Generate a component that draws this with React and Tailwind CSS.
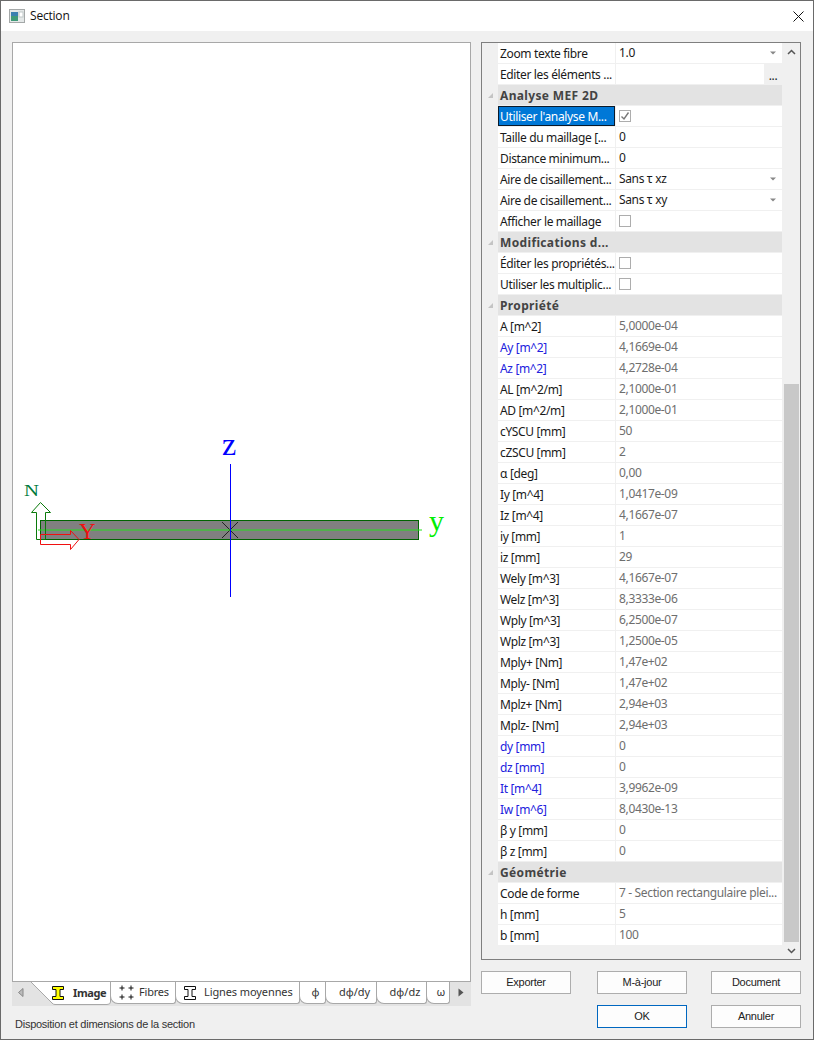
import React from 'react';

const rows = [
  { name: 'Zoom texte fibre', value: '1.0', dark: true, combo: true },
  { name: 'Editer les éléments ...', value: '', button: true },
  { header: 'Analyse MEF 2D' },
  { name: "Utiliser l'analyse M...", check: true, checked: true, selected: true },
  { name: 'Taille du maillage [...', value: '0', dark: true },
  { name: 'Distance minimum...', value: '0', dark: true },
  { name: 'Aire de cisaillement...', value: 'Sans τ xz', dark: true, combo: true },
  { name: 'Aire de cisaillement...', value: 'Sans τ xy', dark: true, combo: true },
  { name: 'Afficher le maillage', check: true },
  { header: 'Modifications d...' },
  { name: 'Éditer les propriétés...', check: true },
  { name: 'Utiliser les multiplic...', check: true },
  { header: 'Propriété' },
  { name: 'A [m^2]', value: '5,0000e-04' },
  { name: 'Ay [m^2]', value: '4,1669e-04', blue: true },
  { name: 'Az [m^2]', value: '4,2728e-04', blue: true },
  { name: 'AL [m^2/m]', value: '2,1000e-01' },
  { name: 'AD [m^2/m]', value: '2,1000e-01' },
  { name: 'cYSCU [mm]', value: '50' },
  { name: 'cZSCU [mm]', value: '2' },
  { name: 'α [deg]', value: '0,00' },
  { name: 'Iy [m^4]', value: '1,0417e-09' },
  { name: 'Iz [m^4]', value: '4,1667e-07' },
  { name: 'iy [mm]', value: '1' },
  { name: 'iz [mm]', value: '29' },
  { name: 'Wely [m^3]', value: '4,1667e-07' },
  { name: 'Welz [m^3]', value: '8,3333e-06' },
  { name: 'Wply [m^3]', value: '6,2500e-07' },
  { name: 'Wplz [m^3]', value: '1,2500e-05' },
  { name: 'Mply+ [Nm]', value: '1,47e+02' },
  { name: 'Mply- [Nm]', value: '1,47e+02' },
  { name: 'Mplz+ [Nm]', value: '2,94e+03' },
  { name: 'Mplz- [Nm]', value: '2,94e+03' },
  { name: 'dy [mm]', value: '0', blue: true },
  { name: 'dz [mm]', value: '0', blue: true },
  { name: 'It [m^4]', value: '3,9962e-09', blue: true },
  { name: 'Iw [m^6]', value: '8,0430e-13', blue: true },
  { name: 'β y [mm]', value: '0' },
  { name: 'β z [mm]', value: '0' },
  { header: 'Géométrie' },
  { name: 'Code de forme', value: '7 - Section rectangulaire plei...' },
  { name: 'h [mm]', value: '5' },
  { name: 'b [mm]', value: '100' },
];

function Row({ row }) {
  if (row.header) {
    return (
      <div className="flex h-[21px] pb-px">
        <div className="w-4 flex items-center justify-center">
          <svg width="7" height="7" viewBox="0 0 7 7"><path d="M6 1V6H1Z" fill="#c4c4c4" /></svg>
        </div>
        <div className="flex-1 bg-[#e3e3e3] pl-[2px] font-bold text-[#444] leading-[22px] tracking-[0.35px] whitespace-nowrap">{row.header}</div>
      </div>
    );
  }
  const nameColor = row.selected
    ? 'bg-[#0078d7] text-white border border-[#0a1a2a] leading-[20px] pl-px'
    : row.blue ? 'bg-white text-[#2222dd] pl-[2px] leading-[22px]' : 'bg-white text-[#1a1a1a] pl-[2px] leading-[22px]';
  return (
    <div className="flex h-[21px] pb-px">
      <div className="w-4" />
      <div className={`w-[117px] mr-px whitespace-nowrap overflow-hidden tracking-[-0.35px] ${nameColor}`}>{row.name}</div>
      <div className={`flex-1 bg-white pl-[3px] leading-[20px] tracking-[-0.35px] whitespace-nowrap flex items-start justify-between ${row.dark ? 'text-[#1a1a1a]' : 'text-[#6e6e6e]'}`}>
        {row.check ? (
          <span className="w-[12px] h-[12px] mt-[4px] border border-[#adadad] flex items-center justify-center">
            {row.checked && (
              <svg width="10" height="10" viewBox="0 0 10 10"><path d="M1.5 5.5L4 8L8.5 1.5" fill="none" stroke="#777" strokeWidth="1.4" /></svg>
            )}
          </span>
        ) : <span>{row.value}</span>}
        {row.combo && (
          <svg className="mr-[6px] mt-[8px]" width="6" height="4" viewBox="0 0 6 4"><path d="M0 0.5H6L3 3.5Z" fill="#888" /></svg>
        )}
        {row.button && (
          <span className="w-[18px] h-[20px] bg-[#f0f0f0] flex items-end justify-center text-[#222] leading-[16px]">...</span>
        )}
      </div>
    </div>
  );
}

function IBeam({ fill }) {
  return (
    <svg width="12" height="14" viewBox="0 0 12 14">
      <path d="M0.5 0.5H11.5V3.5H8V10.5H11.5V13.5H0.5V10.5H4V3.5H0.5Z" fill={fill} stroke="#111" />
    </svg>
  );
}

function Crosses() {
  return (
    <svg width="15" height="15" viewBox="0 0 15 15" stroke="#111">
      <path d="M3 0.5V5.5M0.5 3H5.5M12 0.5V5.5M9.5 3H14.5M3 9.5V14.5M0.5 12H5.5M12 9.5V14.5M9.5 12H14.5" />
    </svg>
  );
}

function Tab({ width, pad, children }) {
  return (
    <div className={`${width} ${pad} -ml-px h-[22px] bg-white border-l border-r border-b border-[#a8a8a8] rounded-bl-[8px] rounded-br-[3px] flex items-center whitespace-nowrap text-[#333] text-[11px]`}>
      {children}
    </div>
  );
}

function Btn({ label, primary }) {
  return (
    <button className={`w-[90px] h-[23px] bg-[#fdfdfd] text-[#222] text-[11px] tracking-[-0.25px] border ${primary ? 'border-[#0067c0]' : 'border-[#adadad]'}`}>
      {label}
    </button>
  );
}

function Drawing() {
  return (
    <svg className="w-full h-full" viewBox="13 43 457 938">
      <rect x="40.5" y="520.5" width="378" height="19" fill="#808080" stroke="#006400" />
      <path d="M222 522L238 538M238 522L222 538" stroke="#222" />
      <path d="M38 530H422" stroke="#22e01a" />
      <path d="M230.5 464V597" stroke="#0000ff" />
      <path d="M36.5 539.5V512.5H31.5L40.5 502.5L50.5 512.5H45.5V539.5Z" fill="none" stroke="#0a7a0a" />
      <path d="M40.5 534.5H70.5V530.5L79 539.5L70.5 549.5V544.5H40.5Z" fill="none" stroke="#f01010" />
      <text x="222" y="455" fontFamily="Liberation Serif, serif" fontSize="32" fill="#0000ff">z</text>
      <text x="429" y="531" fontFamily="Liberation Serif, serif" fontSize="30" fill="#00ee00">y</text>
      <text x="24" y="496" fontFamily="Liberation Serif, serif" fontSize="17" fill="#007a3a" textLength="15" lengthAdjust="spacingAndGlyphs">N</text>
      <text x="79" y="539" fontFamily="Liberation Serif, serif" fontSize="23" fill="#f01010">Y</text>
    </svg>
  );
}

export default function App() {
  return (
    <div className="box-border w-[814px] h-[1040px] flex flex-col bg-[#f0f0f0] border border-[#6a6a6a] text-[12px] font-['Noto_Sans',sans-serif] overflow-hidden">
      <div className="h-[30px] shrink-0 bg-white flex items-center justify-between pl-[8px] pr-[9px]">
        <div className="flex items-center gap-[5px]">
          <svg width="16" height="14" viewBox="0 0 16 14">
            <rect x="0.5" y="0.5" width="15" height="13" fill="#e4e8e8" stroke="#a4a8a8" />
            <rect x="2" y="3" width="7" height="4" fill="#3a80b0" />
            <rect x="2" y="7" width="7" height="5" fill="#3f9a78" />
            <rect x="10" y="3" width="4" height="5" fill="#fff" stroke="#c0c8c8" />
          </svg>
          <span className="text-[#111] tracking-[-0.2px] font-['Open_Sans',sans-serif]">Section</span>
        </div>
        <svg width="11" height="11" viewBox="0 0 11 11"><path d="M0.5 0.5L10.5 10.5M10.5 0.5L0.5 10.5" stroke="#111" /></svg>
      </div>
      <div className="flex-1 flex pt-[11px] pl-[11px]">
        <div className="w-[459px] flex flex-col">
          <div className="flex-1 bg-white border border-[#a8a8a8]">
            <Drawing />
          </div>
          <div className="h-[24px] bg-[#e3e3e3] flex relative">
            <div className="w-[18px] flex items-center justify-center pb-[3px]">
              <svg width="6" height="9" viewBox="0 0 6 9"><path d="M5 0.5V8.5L0.5 4.5Z" fill="#bbb" stroke="#888" /></svg>
            </div>
            <div className="relative w-[80px] h-[24px] flex items-center pl-[22px] gap-[9px] font-bold text-[11px] tracking-[-0.4px] text-[#333]">
              <svg className="absolute left-0 top-0" width="81" height="24" viewBox="0 0 81 24">
                <path d="M0 -1L22 21Q23 22.5 25 22.5H77Q80.5 22.5 80.5 20V-1Z" fill="#fff" stroke="#a8a8a8" />
              </svg>
              <span className="relative pb-[2px]"><IBeam fill="#ffff00" /></span>
              <span className="relative pb-[2px]">Image</span>
            </div>
            <Tab width="w-[66px]" pad="pl-[8px] gap-[5px] ml-0 tracking-[-0.2px]"><Crosses /> Fibres</Tab>
            <Tab width="w-[125px]" pad="pl-[8px] gap-[8px] tracking-[-0.1px]"><IBeam fill="#fff" /> Lignes moyennes</Tab>
            <Tab width="w-[27px]" pad="pl-[6px] justify-center">φ</Tab>
            <Tab width="w-[52px]" pad="pl-[7px] justify-center">dφ/dy</Tab>
            <Tab width="w-[51px]" pad="pl-[7px] justify-center">dφ/dz</Tab>
            <Tab width="w-[24px]" pad="pl-[6px] justify-center">ω</Tab>
            <div className="flex-1 flex items-center justify-center pb-[3px]">
              <svg width="6" height="9" viewBox="0 0 6 9"><path d="M0.5 0.5V8.5L5.5 4.5Z" fill="#555" /></svg>
            </div>
          </div>
          <div className="h-[33px] shrink-0 flex items-center pl-[3px] pt-[3px] text-[11px] tracking-[-0.25px] font-['Liberation_Sans',sans-serif] text-[#333]">
            Disposition et dimensions de la section
          </div>
        </div>
        <div className="w-[320px] ml-[10px] flex flex-col">
          <div className="h-[918px] border border-[#7f7f7f] flex">
            <div className="w-[300px] bg-[#f0f0f0]">
              {rows.map((row, i) => <Row key={i} row={row} />)}
            </div>
            <div className="flex-1 flex flex-col items-center pl-[2px] pr-px">
              <svg className="mt-[6px] shrink-0" width="9" height="6" viewBox="0 0 9 6"><path d="M1 5L4.5 1.5L8 5" fill="none" stroke="#555" strokeWidth="1.5" /></svg>
              <div className="w-[15px] flex-1 flex flex-col justify-end mt-[4px] mb-[6px]">
                <div className="h-[558px] bg-[#c8c8c8]" />
              </div>
              <svg className="mb-[5px] shrink-0" width="9" height="6" viewBox="0 0 9 6"><path d="M1 1L4.5 4.5L8 1" fill="none" stroke="#555" strokeWidth="1.5" /></svg>
            </div>
          </div>
          <div className="mt-[11px] flex justify-between font-['Liberation_Sans',sans-serif]">
            <Btn label="Exporter" />
            <div className="flex gap-[24px]"><Btn label="M-à-jour" /><Btn label="Document" /></div>
          </div>
          <div className="mt-[11px] flex justify-end gap-[24px] font-['Liberation_Sans',sans-serif]">
            <Btn label="OK" primary />
            <Btn label="Annuler" />
          </div>
        </div>
      </div>
    </div>
  );
}
